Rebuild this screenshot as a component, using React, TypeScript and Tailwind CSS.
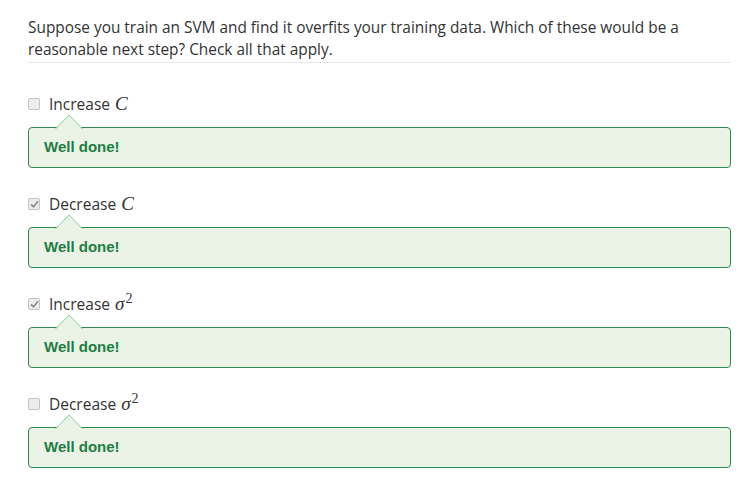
import React from "react";

const Check = ({ checked }: { checked: boolean }) => (
  <span className="inline-flex items-center justify-center w-[12px] h-[12px] rounded-[2px] border border-[#c4c4c4] bg-[#ececec] self-center">
    {checked && (
      <svg width="9" height="9" viewBox="0 0 9 9">
        <path d="M1.5 4.8 L3.6 6.8 L7.6 1.8" stroke="#8a8a8a" strokeWidth="1.6" fill="none" strokeLinecap="round" strokeLinejoin="round" />
      </svg>
    )}
  </span>
);

const Math = ({ kind }: { kind: "C" | "s2" }) =>
  kind === "C" ? (
    <span className="italic text-[19px]" style={{ fontFamily: '"Liberation Serif", serif' }}>
      C
    </span>
  ) : (
    <span style={{ fontFamily: '"Liberation Serif", serif' }}>
      <span className="italic text-[19px]">σ</span>
      <span className="text-[14px] relative top-[-7px] ml-[1px]">2</span>
    </span>
  );

const options: { label: string; math: "C" | "s2"; checked: boolean }[] = [
  { label: "Increase", math: "C", checked: false },
  { label: "Decrease", math: "C", checked: true },
  { label: "Increase", math: "s2", checked: true },
  { label: "Decrease", math: "s2", checked: false },
];

export default function App() {
  return (
    <div
      className="w-[743px] h-[482px] bg-white text-[#333] overflow-hidden"
      style={{ fontFamily: '"Open Sans", sans-serif' }}
    >
      <div className="ml-[28px] w-[703px]">
        <div className="pt-[17px] pb-[1px] border-b border-[#e6e6e6] text-[15.4px] leading-[22px]">
          Suppose you train an SVM and find it overfits your training data. Which of these would be a reasonable next step? Check all that apply.
        </div>
        <div className="flex flex-col gap-[25px] mt-[30px]">
          {options.map((o, i) => (
            <div key={i} className="flex flex-col">
              <div className="flex items-baseline h-[22px] leading-[22px] text-[15.5px]">
                <Check checked={o.checked} />
                <span className="ml-[9px]">{o.label}</span>
                <span className="ml-[5px] leading-[22px]">
                  <Math kind={o.math} />
                </span>
              </div>
              <div className="h-[13px] relative z-10 mb-[-1px]">
                <svg width="28" height="15" viewBox="0 0 28 15" className="ml-[27px] block mt-[-1px]">
                  <path d="M0.5 15 L14 1 L27.5 15" fill="#ebf3e7" stroke="#86d0a0" strokeWidth="1" />
                </svg>
              </div>
              <div className="h-[41px] rounded-[4px] border border-[#2e8a52] bg-[#ebf3e7] flex items-center px-[15px]">
                <span
                  className="font-bold text-[15px] text-[#1e7d45]"
                  style={{ fontFamily: '"Liberation Sans", Arial, sans-serif' }}
                >
                  Well done!
                </span>
              </div>
            </div>
          ))}
        </div>
      </div>
    </div>
  );
}
